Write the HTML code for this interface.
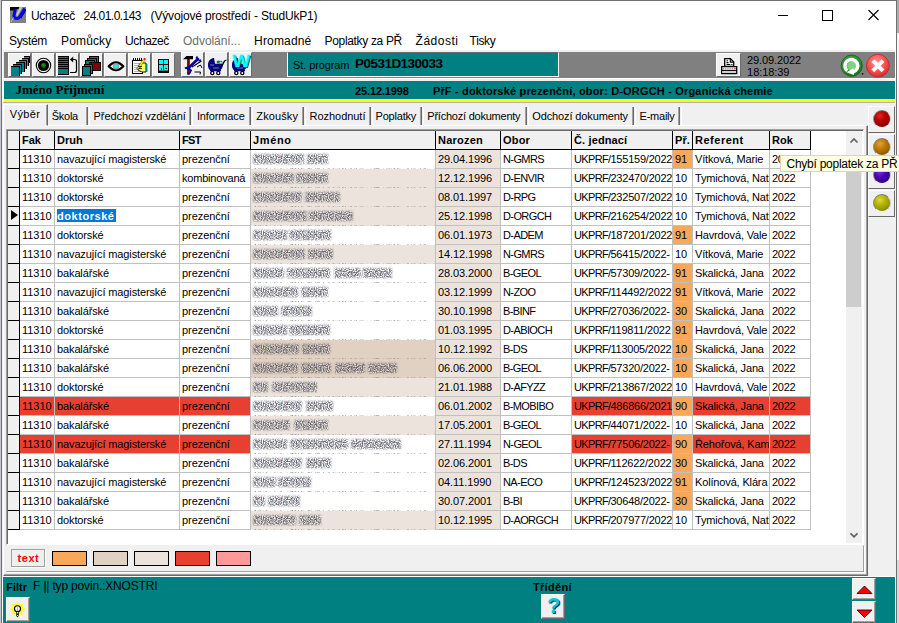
<!DOCTYPE html>
<html lang="cs"><head><meta charset="utf-8"><title>Uchazeč</title>
<style>
*{box-sizing:border-box;margin:0;padding:0}
html,body{width:899px;height:623px;overflow:hidden;background:#fff}
body{position:relative;font-family:"Liberation Sans",sans-serif;font-size:11px;color:#000}
.a{position:absolute}
.t{position:absolute;white-space:nowrap;line-height:1}
.tb{position:absolute;top:53px;width:23px;height:24px;background:#f0f0f0;border:1px solid;border-color:#fff #696969 #696969 #fff}
.tb svg{position:absolute;left:-1px;top:-1px}
.sep{position:absolute;top:107px;width:4px;height:18px;background:linear-gradient(90deg,#a0a0a0 0 1px,#696969 1px 2px,#f0f0f0 2px 3px,#fff 3px)}
.grid{position:absolute;left:0;top:0}
.hc{position:absolute;top:131px;height:19px;background:#f0f0f0;border-right:1px solid #000;border-bottom:1px solid #000;font-weight:bold}
.hc span{position:absolute;left:2px;top:4px;white-space:nowrap;line-height:1}
.ic{position:absolute;left:8px;width:12px;height:19px;background:#f0f0f0;border-right:1px solid #000;border-bottom:1px solid #000}
.ic i{position:absolute;left:3px;top:3px;border-left:7px solid #000;border-top:5.500px solid transparent;border-bottom:5.500px solid transparent}
.c{position:absolute;height:19px;border-right:1px solid #c0c0c0;border-bottom:1px solid #c0c0c0;overflow:hidden}
.c span{position:absolute;left:2px;top:4px;white-space:nowrap;line-height:1}
.c s{text-decoration:none;letter-spacing:-.65px}
.c em{font-style:normal;font-weight:bold;background:#0078d7;color:#fff;padding:1px 1px 0 0}
.c.j{border-bottom:0}
.c.j b{position:absolute;left:2px;top:4px;height:10px;filter:url(#nz);opacity:.88}
.c.j u{position:absolute;left:0;bottom:0;width:100%;height:1px;filter:url(#nl);background:#000}
.sw{position:absolute;top:551px;width:35px;height:15px;border:1px solid #000}
.btn{position:absolute;background:#f0f0f0;border:1px solid;border-color:#fff #696969 #696969 #fff;box-shadow:inset -1px -1px 0 #a0a0a0}
.sb{position:absolute;left:868px;width:27px;height:27px;background:#f0f0f0;border:1px solid;border-color:#fff #696969 #696969 #fff}
.ball{position:absolute;left:4px;top:2.500px;width:18px;height:18px;border-radius:50%;border:1px solid;border-color:#777 #ccc #eee #888}
</style></head><body>
<svg width="0" height="0" style="position:absolute"><defs><filter id="nz" x="-3%" y="-30%" width="106%" height="160%" color-interpolation-filters="sRGB"><feTurbulence type="fractalNoise" baseFrequency="0.85" numOctaves="1" seed="4" result="n"/><feColorMatrix in="n" type="matrix" values="0.5 0 0 0 0.12  0 0.5 0 0 0.12  0 0 0.5 0 0.16  0 0 0 3.4 -1.15" result="sp"/><feGaussianBlur in="SourceAlpha" stdDeviation="1.2" result="m"/><feComposite in="sp" in2="m" operator="in"/></filter><filter id="nl" x="0" y="-100%" width="100%" height="300%" color-interpolation-filters="sRGB"><feTurbulence type="fractalNoise" baseFrequency="0.7" numOctaves="1" seed="9" result="n"/><feColorMatrix in="n" type="matrix" values="0 0 0 0 0.6  0 0 0 0 0.6  0 0 0 0 0.6  0 0 0 3 -1.35" result="sp"/><feGaussianBlur in="SourceAlpha" stdDeviation="0.5" result="m"/><feComposite in="sp" in2="m" operator="in"/></filter></defs></svg>
<!-- window frame -->
<div class="a" style="left:0;top:0;width:1px;height:623px;background:#c4c8cc"></div>
<div class="a" style="left:1px;top:0;width:896px;height:623px;border:1px solid #707070;border-bottom:0;background:#fff"></div>
<div class="a" style="left:897px;top:0;width:2px;height:623px;background:linear-gradient(#ababab 0 33px,#f6f6f6 33px 560px,#d8d8d8 560px)"></div>
<!-- title bar -->
<svg class="a" style="left:10px;top:7px" width="16" height="16" viewBox="0 0 16 16"><rect width="16" height="16" fill="#808080"/><path d="M0 0h9v1.500l-5 2h-4z" fill="#000"/><path d="M9.500 .5l3 -.5l-5 9l-1.500 -1z" fill="#c8c8c8"/><path d="M10.500 11l5 -8" stroke="#000" stroke-width="1.600" fill="none"/><path d="M5.200 2.500l-1.200 6q0 3.200 3.500 3q1.300 -.2 2.300 -1.800l5 -8.200" stroke="#0000ff" stroke-width="3" fill="none" stroke-linejoin="round"/><path d="M1 15l2.500 -4.500" stroke="#c0c0c0" stroke-width="1"/></svg>
<svg class="a" style="left:770px;top:5px" width="120" height="22" viewBox="0 0 120 22"><path d="M8 10.5h10" stroke="#000" fill="none"/><rect x="52.500" y="5.500" width="10" height="10" stroke="#000" fill="none"/><path d="M98.500 5l10 10M108.500 5l-10 10" stroke="#000" stroke-width="1.100" fill="none"/></svg>
<div class="t" style="left:31.1px;top:10px;font-size:12px;letter-spacing:-0.413px;">Uchazeč</div>
<div class="t" style="left:83.6px;top:10px;font-size:12px;letter-spacing:-0.555px;">24.01.0.143</div>
<div class="t" style="left:150.6px;top:10px;font-size:12px;letter-spacing:-0.17px;">(Vývojové prostředí - StudUkP1)</div>
<div class="t" style="left:9.1px;top:35px;font-size:12px;letter-spacing:-0.369px;">Systém</div>
<div class="t" style="left:61.1px;top:35px;font-size:12px;letter-spacing:0.134px;">Pomůcky</div>
<div class="t" style="left:125.1px;top:35px;font-size:12px;letter-spacing:-0.413px;">Uchazeč</div>
<div class="t" style="left:183.1px;top:35px;font-size:12px;letter-spacing:-0.066px;color:#6d6d6d;">Odvolání...</div>
<div class="t" style="left:254.1px;top:35px;font-size:12px;letter-spacing:0.159px;">Hromadné</div>
<div class="t" style="left:324.6px;top:35px;font-size:12px;letter-spacing:-0.339px;">Poplatky za PŘ</div>
<div class="t" style="left:415.6px;top:35px;font-size:12px;letter-spacing:0.492px;">Žádosti</div>
<div class="t" style="left:469.6px;top:35px;font-size:12px;letter-spacing:-0.352px;">Tisky</div>
<!-- toolbar -->
<div class="a" style="left:3px;top:50px;width:892px;height:31px;background:#f0f0f0"></div>
<div class="a" style="left:4px;top:52px;width:891px;height:26px;background:#808080"></div>
<div class="a" style="left:3px;top:78px;width:892px;height:1px;background:#fff"></div>
<div class="tb" style="left:8px"><svg width="23" height="24" shape-rendering="crispEdges"><rect x="16" y="3" width="6" height="7" fill="#000"/><rect x="16" y="4" width="5" height="6" fill="#808000"/><rect x="14" y="5" width="7" height="8" fill="#000"/><rect x="14" y="6" width="6" height="7" fill="#808000"/><rect x="11" y="7" width="8" height="9" fill="#000"/><rect x="11" y="8" width="7" height="8" fill="#808000"/><rect x="8" y="9" width="9" height="10" fill="#000"/><rect x="8" y="10" width="8" height="9" fill="#008080"/><rect x="5" y="11" width="9" height="10" fill="#000"/><rect x="5" y="12" width="8" height="9" fill="#008080"/><rect x="3" y="13" width="9" height="10" fill="#000"/><rect x="3" y="14" width="8" height="9" fill="#008080"/></svg></div>
<div class="tb" style="left:32px"><svg width="23" height="24"><circle cx="11.500" cy="12.500" r="7.200" fill="#f8f8f8" stroke="#000" stroke-width="1.100"/><circle cx="11.500" cy="12.500" r="5.600" fill="#000"/><circle cx="11.500" cy="12.500" r="2.400" fill="#008000"/><circle cx="11.200" cy="11.800" r=".8" fill="#30a030"/></svg></div>
<div class="tb" style="left:56px"><svg width="23" height="24"><g shape-rendering="crispEdges"><rect x="2" y="3" width="11" height="19" fill="#000"/><rect x="2" y="16" width="10" height="5" fill="#008080"/><path d="M2 4.500h10M2 6.500h10M2 8.500h10M2 10.500h10M2 12.500h10M2 14.500h10" stroke="#008080" fill="none"/></g><path d="M14 19.500h4.500q2 0 2 -2v-9q0 -2 -2 -2h-4" stroke="#000" stroke-width="1.200" fill="none"/><path d="M14 6.500l3.200 -3v6z" fill="#000"/></svg></div>
<div class="tb" style="left:80px"><svg width="23" height="24" shape-rendering="crispEdges"><g stroke="#000"><rect x="9.500" y="3.500" width="9" height="9" fill="#008080"/><rect x="7.500" y="5.500" width="9" height="9" fill="#008080"/><rect x="5.500" y="7.500" width="9" height="9" fill="#008080"/><rect x="9.500" y="9.500" width="11" height="8" fill="#800000"/><rect x="4.500" y="11.500" width="8" height="9" fill="#008080"/><rect x="2.500" y="13.500" width="8" height="9" fill="#008080"/></g></svg></div>
<div class="tb" style="left:104px"><svg width="23" height="24"><path d="M4.600 13.300q7.400 -7.800 14.800 0q-7.400 7.800 -14.800 0z" fill="#fff" stroke="#000" stroke-width="2.100" stroke-linejoin="round"/><ellipse cx="12" cy="13.300" rx="3.300" ry="3.200" fill="#9c9c9c"/><circle cx="12" cy="13.300" r="1.800" fill="#00ffff"/></svg></div>
<div class="tb" style="left:128px"><svg width="23" height="24"><g shape-rendering="crispEdges"><rect x="4.500" y="7.500" width="10" height="13" fill="#fff" stroke="#000"/><path d="M5 5v3M7 5v3M9 5v3M11 5v3M13 5v3" stroke="#000"/><path d="M6 10.500h8M6 12.500h6M6 14.500h5M6 16.500h6M6 18.500h7" stroke="#00ffff"/><rect x="18" y="11" width="2" height="8" fill="#00ffff"/></g><path d="M11 11.500l3 -1.500h4v9h-4l-4 -2v-2l2 0z" fill="#ffff60" stroke="#000" stroke-width=".9"/><path d="M8.500 15.500l7 -9.500l1.500 1.200l-6.500 9z" fill="#ffff00" stroke="#404000" stroke-width=".5"/><path d="M15.500 6l1 -1.300l1.500 1.200l-1 1.300z" fill="#ff0000"/><path d="M10 13.500h4M10.500 15.500h3.500" stroke="#000" stroke-width=".8"/></svg></div>
<div class="tb" style="left:152px"><svg width="23" height="24" shape-rendering="crispEdges"><rect x="6" y="6" width="11" height="14" fill="#000"/><rect x="7" y="7" width="9" height="11" fill="#800000"/><rect x="7" y="7" width="4" height="4" fill="#00ffff"/><rect x="12" y="7" width="4" height="4" fill="#00ffff"/><rect x="7" y="12" width="4" height="6" fill="#00ffff"/><rect x="12" y="12" width="4" height="6" fill="#00ffff"/><rect x="9" y="15" width="1" height="2" fill="#a00000"/><rect x="13" y="15" width="2" height="1" fill="#a00000"/><rect x="7" y="17" width="9" height="1" fill="#408080"/></svg></div>
<div class="tb" style="left:181px;top:52px;height:25px"><svg width="23" height="25"><path d="M2 7.200l3.500 -3.200h6.500v3.200z" fill="#000"/><rect x="6.100" y="7" width="2.700" height="15.700" fill="#800000"/><path d="M17.800 6.200l-11.800 11" stroke="#0000a0" stroke-width="2.600"/><path d="M4 16.500q2 -1.500 4 0l2 2q-1 3 -3 3.500" fill="none" stroke="#0000a0" stroke-width="1.800"/><path d="M15 6.500l1.500 -2M17.500 9l2.500 -1" stroke="#0000a0" stroke-width="1.600"/><path d="M11 15l9.500 -6" stroke="#000" stroke-width="1.100"/><path d="M16 15l3.500 -2l1.500 3M13.500 20h6l-.5 2.500" stroke="#000" fill="none" stroke-width="1"/></svg></div>
<div class="tb" style="left:205px;top:52px;height:25px"><svg width="23" height="25"><path d="M3 13c0 -4 2 -6.500 6 -7l1 5.500l8 .5c0 4 -2 7 -6 7h-4c-3 0 -5 -2 -5 -6z" fill="#000080"/><path d="M17 14l2.500 -5l2 -1" stroke="#000" stroke-width="1.300" fill="none"/><path d="M11 10l2 -1.500l4 .5l1 2.500h-6z" fill="#008080"/><path d="M14 10.500l2 -1l1 1.500z" fill="#fff"/><path d="M10 8.500l2.500 3h-2.500z" fill="#ffff00"/><path d="M5 13h4M8 16h6" stroke="#808080" stroke-width="1"/><circle cx="7.300" cy="21" r="1.600" fill="#fff" stroke="#000" stroke-width="1.300"/><circle cx="13.300" cy="21" r="1.600" fill="#fff" stroke="#000" stroke-width="1.300"/><path d="M5 18.500h11" stroke="#000080" stroke-width="1.500"/></svg></div>
<div class="tb" style="left:229px;top:52px;height:25px"><svg width="23" height="25"><path d="M3 13c0 -4 2 -6.500 6 -7l1 5.500l8 .5c0 4 -2 7 -6 7h-4c-3 0 -5 -2 -5 -6z" fill="#000080"/><path d="M8 16h6" stroke="#808080" stroke-width="1"/><circle cx="7.300" cy="21" r="1.600" fill="#fff" stroke="#000" stroke-width="1.300"/><circle cx="13.300" cy="21" r="1.600" fill="#fff" stroke="#000" stroke-width="1.300"/><path d="M5 18.500h11" stroke="#000080" stroke-width="1.500"/><text x="3.600" y="15" font-family="Liberation Sans,sans-serif" font-weight="bold" font-size="16.500" textLength="17.800" lengthAdjust="spacingAndGlyphs" fill="#000" transform="translate(.7,.6)">W</text><text x="3.600" y="15" font-family="Liberation Sans,sans-serif" font-weight="bold" font-size="16.500" textLength="17.800" lengthAdjust="spacingAndGlyphs" fill="#00ffff" stroke="#00ffff" stroke-width=".4">W</text></svg></div>
<div class="tb" style="left:716px;width:25px"><svg width="25" height="24"><path d="M8.700 13.500v-7.800h5.800l3.200 3.200v4.600z" fill="#fff" stroke="#000" stroke-width="1.300"/><path d="M14.300 5.700v3.400h3.400" fill="none" stroke="#000" stroke-width="1.100"/><path d="M10.500 7.700h1.500M10.500 9.600h2M10.500 11.500h3.800M15.300 11.500h1.200" stroke="#000" stroke-width="1.100"/><rect x="5.700" y="13.600" width="15" height="7" fill="#fff" stroke="#000" stroke-width="1.300"/><path d="M7 15.500h11" stroke="#999" stroke-width="1.400" stroke-dasharray="1 .8"/><rect x="18.300" y="14.800" width="1.300" height="1.300" fill="#ff0000"/><path d="M5.700 17.400h15" stroke="#000" stroke-width="1.100"/><rect x="6.500" y="18" width="13.500" height="2" fill="#d0d0d0"/></svg></div>
<svg class="a" style="left:838px;top:52px" width="57" height="28" viewBox="0 0 57 28"><defs><radialGradient id="gg" cx=".45" cy=".4" r=".65"><stop offset="0" stop-color="#58b858"/><stop offset=".7" stop-color="#2c8c2c"/><stop offset="1" stop-color="#145c14"/></radialGradient><radialGradient id="rg" cx=".45" cy=".35" r=".7"><stop offset="0" stop-color="#ff9898"/><stop offset=".55" stop-color="#f85050"/><stop offset="1" stop-color="#d42424"/></radialGradient></defs><circle cx="13.700" cy="13.700" r="10.600" fill="url(#gg)" stroke="#1c641c" stroke-width=".9"/><circle cx="13.700" cy="13.700" r="4.600" fill="#84d084"/><path d="M9.300 18.700a6.400 6.400 0 1 1 5.500 1.300" fill="none" stroke="#fff" stroke-width="3.400"/><path d="M8.700 20.300l6.800 -4.300l.5 7z" fill="#fff"/><circle cx="24.600" cy="21.800" r=".9" fill="#111"/><circle cx="39.900" cy="13.700" r="11.400" fill="url(#rg)" stroke="#c82828" stroke-width=".9"/><path d="M34.800 8.600l10.200 10.200M45 8.600l-10.200 10.200" stroke="#fff" stroke-width="4"/></svg>

<!-- st program field -->
<div class="a" style="left:287px;top:52px;width:272px;height:25px;background:#008080;border:1px solid;border-color:#696969 #fff #fff #fff"></div>
<!-- teal name bar -->
<div class="a" style="left:4px;top:81px;width:891px;height:18px;background:#008080"></div>
<div class="a" style="left:4px;top:99px;width:891px;height:3px;background:#ffff00"></div>
<div class="a" style="left:2px;top:102px;width:894px;height:474px;background:#f0f0f0"></div>
<div class="a" style="left:3px;top:102px;width:892px;height:1px;background:#b0b0b0"></div>
<!-- tab page frame -->
<div class="a" style="left:3px;top:125px;width:865px;height:451px;border:1px solid;border-color:#fff #696969 #696969 #fff;box-shadow:inset -1px -1px 0 #a0a0a0"></div>
<!-- selected tab -->
<div class="a" style="left:3px;top:104px;width:45px;height:22px;background:#f0f0f0;border:1px solid;border-color:#fff #696969 #f0f0f0 #fff;box-shadow:inset -1px 0 0 #a0a0a0"></div>
<div class="t" style="left:9.7px;top:109px;font-size:11px;letter-spacing:0.37px;">Výběr</div>
<div class="t" style="left:51.8px;top:111px;font-size:11px;letter-spacing:-0.286px;">Škola</div>
<div class="t" style="left:93.6px;top:111px;font-size:11px;letter-spacing:-0.081px;">Předchozí vzdělání</div>
<div class="t" style="left:196.9px;top:111px;font-size:11px;letter-spacing:-0.125px;">Informace</div>
<div class="t" style="left:256.3px;top:111px;font-size:11px;letter-spacing:0.119px;">Zkoušky</div>
<div class="t" style="left:309.6px;top:111px;font-size:11px;letter-spacing:-0.047px;">Rozhodnutí</div>
<div class="t" style="left:375.6px;top:111px;font-size:11px;letter-spacing:-0.213px;">Poplatky</div>
<div class="t" style="left:427.3px;top:111px;font-size:11px;letter-spacing:-0.229px;">Příchozí dokumenty</div>
<div class="t" style="left:532.3px;top:111px;font-size:11px;letter-spacing:-0.126px;">Odchozí dokumenty</div>
<div class="t" style="left:639.6px;top:111px;font-size:11px;letter-spacing:-0.239px;">E-maily</div>
<div class="sep" style="left:86px"></div>
<div class="sep" style="left:189px"></div>
<div class="sep" style="left:249px"></div>
<div class="sep" style="left:302px"></div>
<div class="sep" style="left:369px"></div>
<div class="sep" style="left:420px"></div>
<div class="sep" style="left:525px"></div>
<div class="sep" style="left:632px"></div>
<div class="sep" style="left:678px"></div>
<!-- grid panel -->
<div class="a" style="left:6px;top:129px;width:858px;height:416px;background:#fff;border:1px solid;border-color:#a0a0a0 #fff #fff #a0a0a0;box-shadow:inset 1px 1px 0 #696969"></div>
<div class="grid">
<div class="hc" style="left:8px;width:12px"></div>
<div class="hc" style="left:20px;width:35px"><span style="letter-spacing:-0.056px">Fak</span></div>
<div class="hc" style="left:55px;width:125px"><span style="letter-spacing:0.032px">Druh</span></div>
<div class="hc" style="left:180px;width:71px"><span style="letter-spacing:-0.66px">FST</span></div>
<div class="hc" style="left:251px;width:185px"><span style="letter-spacing:0.626px">Jméno</span></div>
<div class="hc" style="left:436px;width:65px"><span style="letter-spacing:0.228px">Narozen</span></div>
<div class="hc" style="left:501px;width:71px"><span style="letter-spacing:0.18px">Obor</span></div>
<div class="hc" style="left:572px;width:101px"><span style="letter-spacing:0.133px">Č. jednací</span></div>
<div class="hc" style="left:673px;width:20px"><span style="letter-spacing:0.104px">Př.</span></div>
<div class="hc" style="left:693px;width:77px"><span style="letter-spacing:0.522px">Referent</span></div>
<div class="hc" style="left:770px;width:41px"><span style="letter-spacing:0.006px">Rok</span></div>
<div class="ic" style="top:150px"></div>
<div class="c" style="left:20px;top:150px;width:35px;background:#fff"><span style="letter-spacing:-0.05px">11310</span></div>
<div class="c" style="left:55px;top:150px;width:125px;background:#fff"><span style="letter-spacing:-0.12px">navazující magisterské</span></div>
<div class="c" style="left:180px;top:150px;width:71px;background:#fff"><span style="letter-spacing:-0.05px">prezenční</span></div>
<div class="c j" style="left:251px;top:150px;width:185px;background:#fff"><u></u><b style="width:75px;background:linear-gradient(90deg,transparent 0px 0.3px,#000 0.3px 51px,transparent 51px 53.8px,#000 53.8px 74.8px)"></b></div>
<div class="c" style="left:436px;top:150px;width:65px;background:#ece4dc"><span style="letter-spacing:-0.1px">29.04.1996</span></div>
<div class="c" style="left:501px;top:150px;width:71px;background:#fff"><span style="letter-spacing:-0.6px">N-GMRS</span></div>
<div class="c" style="left:572px;top:150px;width:101px;background:#fff"><span style="letter-spacing:-0.22px"><s>UKPRF/</s>155159/2022</span></div>
<div class="c" style="left:673px;top:150px;width:20px;background:#f8a858"><span style="letter-spacing:-0.2px">91</span></div>
<div class="c" style="left:693px;top:150px;width:77px;background:#fff"><span style="letter-spacing:-0.15px">Vítková, Marie</span></div>
<div class="c" style="left:770px;top:150px;width:41px;background:#fff"><span style="letter-spacing:-0.3px">2022</span></div>
<div class="ic" style="top:169px"></div>
<div class="c" style="left:20px;top:169px;width:35px;background:#fff"><span style="letter-spacing:-0.05px">11310</span></div>
<div class="c" style="left:55px;top:169px;width:125px;background:#fff"><span style="letter-spacing:-0.12px">doktorské</span></div>
<div class="c" style="left:180px;top:169px;width:71px;background:#fff"><span style="letter-spacing:-0.2px">kombinovaná</span></div>
<div class="c j" style="left:251px;top:169px;width:185px;background:#ece4dc"><u></u><b style="width:75px;background:linear-gradient(90deg,transparent 0px 0.3px,#000 0.3px 41px,transparent 41px 43px,#000 43px 74.8px)"></b></div>
<div class="c" style="left:436px;top:169px;width:65px;background:#ece4dc"><span style="letter-spacing:-0.1px">12.12.1996</span></div>
<div class="c" style="left:501px;top:169px;width:71px;background:#fff"><span style="letter-spacing:-0.6px">D-ENVIR</span></div>
<div class="c" style="left:572px;top:169px;width:101px;background:#fff"><span style="letter-spacing:-0.22px"><s>UKPRF/</s>232470/2022</span></div>
<div class="c" style="left:673px;top:169px;width:20px;background:#fff"><span style="letter-spacing:-0.2px">10</span></div>
<div class="c" style="left:693px;top:169px;width:77px;background:#fff"><span style="letter-spacing:-0.15px">Tymichová, Nat</span></div>
<div class="c" style="left:770px;top:169px;width:41px;background:#fff"><span style="letter-spacing:-0.3px">2022</span></div>
<div class="ic" style="top:188px"></div>
<div class="c" style="left:20px;top:188px;width:35px;background:#fff"><span style="letter-spacing:-0.05px">11310</span></div>
<div class="c" style="left:55px;top:188px;width:125px;background:#fff"><span style="letter-spacing:-0.12px">doktorské</span></div>
<div class="c" style="left:180px;top:188px;width:71px;background:#fff"><span style="letter-spacing:-0.05px">prezenční</span></div>
<div class="c j" style="left:251px;top:188px;width:185px;background:#ece4dc"><u></u><b style="width:87px;background:linear-gradient(90deg,transparent 0px 0.3px,#000 0.3px 49px,transparent 49px 52px,#000 52px 86.7px)"></b></div>
<div class="c" style="left:436px;top:188px;width:65px;background:#ece4dc"><span style="letter-spacing:-0.1px">08.01.1997</span></div>
<div class="c" style="left:501px;top:188px;width:71px;background:#fff"><span style="letter-spacing:-0.6px">D-RPG</span></div>
<div class="c" style="left:572px;top:188px;width:101px;background:#fff"><span style="letter-spacing:-0.22px"><s>UKPRF/</s>232507/2022</span></div>
<div class="c" style="left:673px;top:188px;width:20px;background:#fff"><span style="letter-spacing:-0.2px">10</span></div>
<div class="c" style="left:693px;top:188px;width:77px;background:#fff"><span style="letter-spacing:-0.15px">Tymichová, Nat</span></div>
<div class="c" style="left:770px;top:188px;width:41px;background:#fff"><span style="letter-spacing:-0.3px">2022</span></div>
<div class="ic" style="top:207px"><i></i></div>
<div class="c" style="left:20px;top:207px;width:35px;background:#fff"><span style="letter-spacing:-0.05px">11310</span></div>
<div class="c" style="left:55px;top:207px;width:125px;background:#fff"><span style="letter-spacing:0.55px"><em>doktorské</em></span></div>
<div class="c" style="left:180px;top:207px;width:71px;background:#fff"><span style="letter-spacing:-0.05px">prezenční</span></div>
<div class="c j" style="left:251px;top:207px;width:185px;background:#ece4dc"><u></u><b style="width:100px;background:linear-gradient(90deg,transparent 0px 0.3px,#000 0.3px 53.8px,transparent 53.8px 56.5px,#000 56.5px 99.5px)"></b></div>
<div class="c" style="left:436px;top:207px;width:65px;background:#ece4dc"><span style="letter-spacing:-0.1px">25.12.1998</span></div>
<div class="c" style="left:501px;top:207px;width:71px;background:#fff"><span style="letter-spacing:-0.6px">D-ORGCH</span></div>
<div class="c" style="left:572px;top:207px;width:101px;background:#fff"><span style="letter-spacing:-0.22px"><s>UKPRF/</s>216254/2022</span></div>
<div class="c" style="left:673px;top:207px;width:20px;background:#fff"><span style="letter-spacing:-0.2px">10</span></div>
<div class="c" style="left:693px;top:207px;width:77px;background:#fff"><span style="letter-spacing:-0.15px">Tymichová, Nat</span></div>
<div class="c" style="left:770px;top:207px;width:41px;background:#fff"><span style="letter-spacing:-0.3px">2022</span></div>
<div class="ic" style="top:226px"></div>
<div class="c" style="left:20px;top:226px;width:35px;background:#fff"><span style="letter-spacing:-0.05px">11310</span></div>
<div class="c" style="left:55px;top:226px;width:125px;background:#fff"><span style="letter-spacing:-0.12px">doktorské</span></div>
<div class="c" style="left:180px;top:226px;width:71px;background:#fff"><span style="letter-spacing:-0.05px">prezenční</span></div>
<div class="c j" style="left:251px;top:226px;width:185px;background:#fff"><u></u><b style="width:78px;background:linear-gradient(90deg,transparent 0px 0.3px,#000 0.3px 33.6px,transparent 33.6px 36.4px,#000 36.4px 78.5px)"></b></div>
<div class="c" style="left:436px;top:226px;width:65px;background:#ece4dc"><span style="letter-spacing:-0.1px">06.01.1973</span></div>
<div class="c" style="left:501px;top:226px;width:71px;background:#fff"><span style="letter-spacing:-0.6px">D-ADEM</span></div>
<div class="c" style="left:572px;top:226px;width:101px;background:#fff"><span style="letter-spacing:-0.22px"><s>UKPRF/</s>187201/2022</span></div>
<div class="c" style="left:673px;top:226px;width:20px;background:#f8a858"><span style="letter-spacing:-0.2px">91</span></div>
<div class="c" style="left:693px;top:226px;width:77px;background:#fff"><span style="letter-spacing:-0.15px">Havrdová, Vale</span></div>
<div class="c" style="left:770px;top:226px;width:41px;background:#fff"><span style="letter-spacing:-0.3px">2022</span></div>
<div class="ic" style="top:245px"></div>
<div class="c" style="left:20px;top:245px;width:35px;background:#fff"><span style="letter-spacing:-0.05px">11310</span></div>
<div class="c" style="left:55px;top:245px;width:125px;background:#fff"><span style="letter-spacing:-0.12px">navazující magisterské</span></div>
<div class="c" style="left:180px;top:245px;width:71px;background:#fff"><span style="letter-spacing:-0.05px">prezenční</span></div>
<div class="c j" style="left:251px;top:245px;width:185px;background:#ece4dc"><u></u><b style="width:80px;background:linear-gradient(90deg,transparent 0px 0.3px,#000 0.3px 52px,transparent 52px 54.7px,#000 54.7px 80.3px)"></b></div>
<div class="c" style="left:436px;top:245px;width:65px;background:#ece4dc"><span style="letter-spacing:-0.1px">14.12.1998</span></div>
<div class="c" style="left:501px;top:245px;width:71px;background:#fff"><span style="letter-spacing:-0.6px">N-GMRS</span></div>
<div class="c" style="left:572px;top:245px;width:101px;background:#fff"><span style="letter-spacing:-0.22px"><s>UKPRF/</s>56415/2022-</span></div>
<div class="c" style="left:673px;top:245px;width:20px;background:#fff"><span style="letter-spacing:-0.2px">10</span></div>
<div class="c" style="left:693px;top:245px;width:77px;background:#fff"><span style="letter-spacing:-0.15px">Vítková, Marie</span></div>
<div class="c" style="left:770px;top:245px;width:41px;background:#fff"><span style="letter-spacing:-0.3px">2022</span></div>
<div class="ic" style="top:264px"></div>
<div class="c" style="left:20px;top:264px;width:35px;background:#fff"><span style="letter-spacing:-0.05px">11310</span></div>
<div class="c" style="left:55px;top:264px;width:125px;background:#fff"><span style="letter-spacing:-0.12px">bakalářské</span></div>
<div class="c" style="left:180px;top:264px;width:71px;background:#fff"><span style="letter-spacing:-0.05px">prezenční</span></div>
<div class="c j" style="left:251px;top:264px;width:185px;background:#fff"><u></u><b style="width:139px;background:linear-gradient(90deg,transparent 0px 0.3px,#000 0.3px 30.9px,transparent 30.9px 33.6px,#000 33.6px 77.5px,transparent 77.5px 81.2px,#000 81.2px 107.8px,transparent 107.8px 110.5px,#000 110.5px 138.9px)"></b></div>
<div class="c" style="left:436px;top:264px;width:65px;background:#ece4dc"><span style="letter-spacing:-0.1px">28.03.2000</span></div>
<div class="c" style="left:501px;top:264px;width:71px;background:#fff"><span style="letter-spacing:-0.6px">B-GEOL</span></div>
<div class="c" style="left:572px;top:264px;width:101px;background:#fff"><span style="letter-spacing:-0.22px"><s>UKPRF/</s>57309/2022-</span></div>
<div class="c" style="left:673px;top:264px;width:20px;background:#f8a858"><span style="letter-spacing:-0.2px">91</span></div>
<div class="c" style="left:693px;top:264px;width:77px;background:#fff"><span style="letter-spacing:-0.15px">Skalická, Jana</span></div>
<div class="c" style="left:770px;top:264px;width:41px;background:#fff"><span style="letter-spacing:-0.3px">2022</span></div>
<div class="ic" style="top:283px"></div>
<div class="c" style="left:20px;top:283px;width:35px;background:#fff"><span style="letter-spacing:-0.05px">11310</span></div>
<div class="c" style="left:55px;top:283px;width:125px;background:#fff"><span style="letter-spacing:-0.12px">navazující magisterské</span></div>
<div class="c" style="left:180px;top:283px;width:71px;background:#fff"><span style="letter-spacing:-0.05px">prezenční</span></div>
<div class="c j" style="left:251px;top:283px;width:185px;background:#fff"><u></u><b style="width:75px;background:linear-gradient(90deg,transparent 0px 0.3px,#000 0.3px 45.5px,transparent 45.5px 48.3px,#000 48.3px 74.8px)"></b></div>
<div class="c" style="left:436px;top:283px;width:65px;background:#ece4dc"><span style="letter-spacing:-0.1px">03.12.1999</span></div>
<div class="c" style="left:501px;top:283px;width:71px;background:#fff"><span style="letter-spacing:-0.6px">N-ZOO</span></div>
<div class="c" style="left:572px;top:283px;width:101px;background:#fff"><span style="letter-spacing:-0.22px"><s>UKPRF/</s>114492/2022</span></div>
<div class="c" style="left:673px;top:283px;width:20px;background:#f8a858"><span style="letter-spacing:-0.2px">91</span></div>
<div class="c" style="left:693px;top:283px;width:77px;background:#fff"><span style="letter-spacing:-0.15px">Vítková, Marie</span></div>
<div class="c" style="left:770px;top:283px;width:41px;background:#fff"><span style="letter-spacing:-0.3px">2022</span></div>
<div class="ic" style="top:302px"></div>
<div class="c" style="left:20px;top:302px;width:35px;background:#fff"><span style="letter-spacing:-0.05px">11310</span></div>
<div class="c" style="left:55px;top:302px;width:125px;background:#fff"><span style="letter-spacing:-0.12px">bakalářské</span></div>
<div class="c" style="left:180px;top:302px;width:71px;background:#fff"><span style="letter-spacing:-0.05px">prezenční</span></div>
<div class="c j" style="left:251px;top:302px;width:185px;background:#fff"><u></u><b style="width:59px;background:linear-gradient(90deg,transparent 0px 0.3px,#000 0.3px 25.4px,transparent 25.4px 28.1px,#000 28.1px 59.2px)"></b></div>
<div class="c" style="left:436px;top:302px;width:65px;background:#ece4dc"><span style="letter-spacing:-0.1px">30.10.1998</span></div>
<div class="c" style="left:501px;top:302px;width:71px;background:#fff"><span style="letter-spacing:-0.6px">B-BINF</span></div>
<div class="c" style="left:572px;top:302px;width:101px;background:#fff"><span style="letter-spacing:-0.22px"><s>UKPRF/</s>27036/2022-</span></div>
<div class="c" style="left:673px;top:302px;width:20px;background:#f8a858"><span style="letter-spacing:-0.2px">30</span></div>
<div class="c" style="left:693px;top:302px;width:77px;background:#fff"><span style="letter-spacing:-0.15px">Skalická, Jana</span></div>
<div class="c" style="left:770px;top:302px;width:41px;background:#fff"><span style="letter-spacing:-0.3px">2022</span></div>
<div class="ic" style="top:321px"></div>
<div class="c" style="left:20px;top:321px;width:35px;background:#fff"><span style="letter-spacing:-0.05px">11310</span></div>
<div class="c" style="left:55px;top:321px;width:125px;background:#fff"><span style="letter-spacing:-0.12px">doktorské</span></div>
<div class="c" style="left:180px;top:321px;width:71px;background:#fff"><span style="letter-spacing:-0.05px">prezenční</span></div>
<div class="c j" style="left:251px;top:321px;width:185px;background:#fff"><u></u><b style="width:77px;background:linear-gradient(90deg,transparent 0px 0.3px,#000 0.3px 33.6px,transparent 33.6px 35.8px,#000 35.8px 76.6px)"></b></div>
<div class="c" style="left:436px;top:321px;width:65px;background:#ece4dc"><span style="letter-spacing:-0.1px">01.03.1995</span></div>
<div class="c" style="left:501px;top:321px;width:71px;background:#fff"><span style="letter-spacing:-0.6px">D-ABIOCH</span></div>
<div class="c" style="left:572px;top:321px;width:101px;background:#fff"><span style="letter-spacing:-0.22px"><s>UKPRF/</s>119811/2022</span></div>
<div class="c" style="left:673px;top:321px;width:20px;background:#f8a858"><span style="letter-spacing:-0.2px">91</span></div>
<div class="c" style="left:693px;top:321px;width:77px;background:#fff"><span style="letter-spacing:-0.15px">Havrdová, Vale</span></div>
<div class="c" style="left:770px;top:321px;width:41px;background:#fff"><span style="letter-spacing:-0.3px">2022</span></div>
<div class="ic" style="top:340px"></div>
<div class="c" style="left:20px;top:340px;width:35px;background:#fff"><span style="letter-spacing:-0.05px">11310</span></div>
<div class="c" style="left:55px;top:340px;width:125px;background:#fff"><span style="letter-spacing:-0.12px">bakalářské</span></div>
<div class="c" style="left:180px;top:340px;width:71px;background:#fff"><span style="letter-spacing:-0.05px">prezenční</span></div>
<div class="c j" style="left:251px;top:340px;width:185px;background:#e0d1c2"><u></u><b style="width:77px;background:linear-gradient(90deg,transparent 0px 0.3px,#000 0.3px 46.4px,transparent 46.4px 49.2px,#000 49.2px 76.6px)"></b></div>
<div class="c" style="left:436px;top:340px;width:65px;background:#ece4dc"><span style="letter-spacing:-0.1px">10.12.1992</span></div>
<div class="c" style="left:501px;top:340px;width:71px;background:#fff"><span style="letter-spacing:-0.6px">B-DS</span></div>
<div class="c" style="left:572px;top:340px;width:101px;background:#fff"><span style="letter-spacing:-0.22px"><s>UKPRF/</s>113005/2022</span></div>
<div class="c" style="left:673px;top:340px;width:20px;background:#f8a858"><span style="letter-spacing:-0.2px">10</span></div>
<div class="c" style="left:693px;top:340px;width:77px;background:#fff"><span style="letter-spacing:-0.15px">Skalická, Jana</span></div>
<div class="c" style="left:770px;top:340px;width:41px;background:#fff"><span style="letter-spacing:-0.3px">2022</span></div>
<div class="ic" style="top:359px"></div>
<div class="c" style="left:20px;top:359px;width:35px;background:#fff"><span style="letter-spacing:-0.05px">11310</span></div>
<div class="c" style="left:55px;top:359px;width:125px;background:#fff"><span style="letter-spacing:-0.12px">bakalářské</span></div>
<div class="c" style="left:180px;top:359px;width:71px;background:#fff"><span style="letter-spacing:-0.05px">prezenční</span></div>
<div class="c j" style="left:251px;top:359px;width:185px;background:#e0d1c2"><u></u><b style="width:144px;background:linear-gradient(90deg,transparent 0px 0.3px,#000 0.3px 45.5px,transparent 45.5px 48.3px,#000 48.3px 78.5px,transparent 78.5px 82px,#000 82px 112.3px,transparent 112.3px 115px,#000 115px 143.5px)"></b></div>
<div class="c" style="left:436px;top:359px;width:65px;background:#ece4dc"><span style="letter-spacing:-0.1px">06.06.2000</span></div>
<div class="c" style="left:501px;top:359px;width:71px;background:#fff"><span style="letter-spacing:-0.6px">B-GEOL</span></div>
<div class="c" style="left:572px;top:359px;width:101px;background:#fff"><span style="letter-spacing:-0.22px"><s>UKPRF/</s>57320/2022-</span></div>
<div class="c" style="left:673px;top:359px;width:20px;background:#f8a858"><span style="letter-spacing:-0.2px">10</span></div>
<div class="c" style="left:693px;top:359px;width:77px;background:#fff"><span style="letter-spacing:-0.15px">Skalická, Jana</span></div>
<div class="c" style="left:770px;top:359px;width:41px;background:#fff"><span style="letter-spacing:-0.3px">2022</span></div>
<div class="ic" style="top:378px"></div>
<div class="c" style="left:20px;top:378px;width:35px;background:#fff"><span style="letter-spacing:-0.05px">11310</span></div>
<div class="c" style="left:55px;top:378px;width:125px;background:#fff"><span style="letter-spacing:-0.12px">doktorské</span></div>
<div class="c" style="left:180px;top:378px;width:71px;background:#fff"><span style="letter-spacing:-0.05px">prezenční</span></div>
<div class="c j" style="left:251px;top:378px;width:185px;background:#ece4dc"><u></u><b style="width:64px;background:linear-gradient(90deg,#000 -0.1px 15.3px,transparent 15.3px 19px,#000 19px 64px)"></b></div>
<div class="c" style="left:436px;top:378px;width:65px;background:#ece4dc"><span style="letter-spacing:-0.1px">21.01.1988</span></div>
<div class="c" style="left:501px;top:378px;width:71px;background:#fff"><span style="letter-spacing:-0.6px">D-AFYZZ</span></div>
<div class="c" style="left:572px;top:378px;width:101px;background:#fff"><span style="letter-spacing:-0.22px"><s>UKPRF/</s>213867/2022</span></div>
<div class="c" style="left:673px;top:378px;width:20px;background:#fff"><span style="letter-spacing:-0.2px">10</span></div>
<div class="c" style="left:693px;top:378px;width:77px;background:#fff"><span style="letter-spacing:-0.15px">Havrdová, Vale</span></div>
<div class="c" style="left:770px;top:378px;width:41px;background:#fff"><span style="letter-spacing:-0.3px">2022</span></div>
<div class="ic" style="top:397px"></div>
<div class="c" style="left:20px;top:397px;width:35px;background:#e84030"><span style="letter-spacing:-0.05px">11310</span></div>
<div class="c" style="left:55px;top:397px;width:125px;background:#e84030"><span style="letter-spacing:-0.12px">bakalářské</span></div>
<div class="c" style="left:180px;top:397px;width:71px;background:#e84030"><span style="letter-spacing:-0.05px">prezenční</span></div>
<div class="c j" style="left:251px;top:397px;width:185px;background:#fff"><u></u><b style="width:80px;background:linear-gradient(90deg,#000 0px 49.4px,transparent 49.4px 52.6px,#000 52.6px 80px)"></b></div>
<div class="c" style="left:436px;top:397px;width:65px;background:#ece4dc"><span style="letter-spacing:-0.1px">06.01.2002</span></div>
<div class="c" style="left:501px;top:397px;width:71px;background:#fff"><span style="letter-spacing:-0.6px">B-MOBIBO</span></div>
<div class="c" style="left:572px;top:397px;width:101px;background:#e84030"><span style="letter-spacing:-0.22px"><s>UKPRF/</s>486866/2021</span></div>
<div class="c" style="left:673px;top:397px;width:20px;background:#f8a858"><span style="letter-spacing:-0.2px">90</span></div>
<div class="c" style="left:693px;top:397px;width:77px;background:#e84030"><span style="letter-spacing:-0.15px">Skalická, Jana</span></div>
<div class="c" style="left:770px;top:397px;width:41px;background:#e84030"><span style="letter-spacing:-0.3px">2022</span></div>
<div class="ic" style="top:416px"></div>
<div class="c" style="left:20px;top:416px;width:35px;background:#fff"><span style="letter-spacing:-0.05px">11310</span></div>
<div class="c" style="left:55px;top:416px;width:125px;background:#fff"><span style="letter-spacing:-0.12px">bakalářské</span></div>
<div class="c" style="left:180px;top:416px;width:71px;background:#fff"><span style="letter-spacing:-0.05px">prezenční</span></div>
<div class="c j" style="left:251px;top:416px;width:185px;background:#ece4dc"><u></u><b style="width:75px;background:linear-gradient(90deg,#000 0px 37.2px,transparent 37.2px 40.9px,#000 40.9px 75px)"></b></div>
<div class="c" style="left:436px;top:416px;width:65px;background:#ece4dc"><span style="letter-spacing:-0.1px">17.05.2001</span></div>
<div class="c" style="left:501px;top:416px;width:71px;background:#fff"><span style="letter-spacing:-0.6px">B-GEOL</span></div>
<div class="c" style="left:572px;top:416px;width:101px;background:#fff"><span style="letter-spacing:-0.22px"><s>UKPRF/</s>44071/2022-</span></div>
<div class="c" style="left:673px;top:416px;width:20px;background:#fff"><span style="letter-spacing:-0.2px">10</span></div>
<div class="c" style="left:693px;top:416px;width:77px;background:#fff"><span style="letter-spacing:-0.15px">Skalická, Jana</span></div>
<div class="c" style="left:770px;top:416px;width:41px;background:#fff"><span style="letter-spacing:-0.3px">2022</span></div>
<div class="ic" style="top:435px"></div>
<div class="c" style="left:20px;top:435px;width:35px;background:#e84030"><span style="letter-spacing:-0.05px">11310</span></div>
<div class="c" style="left:55px;top:435px;width:125px;background:#e84030"><span style="letter-spacing:-0.12px">navazující magisterské</span></div>
<div class="c" style="left:180px;top:435px;width:71px;background:#e84030"><span style="letter-spacing:-0.05px">prezenční</span></div>
<div class="c j" style="left:251px;top:435px;width:185px;background:#fff"><u></u><b style="width:148px;background:linear-gradient(90deg,#000 0px 33.6px,transparent 33.6px 37.2px,#000 37.2px 94.6px,transparent 94.6px 98.2px,#000 98.2px 148.2px)"></b></div>
<div class="c" style="left:436px;top:435px;width:65px;background:#ece4dc"><span style="letter-spacing:-0.1px">27.11.1994</span></div>
<div class="c" style="left:501px;top:435px;width:71px;background:#fff"><span style="letter-spacing:-0.6px">N-GEOL</span></div>
<div class="c" style="left:572px;top:435px;width:101px;background:#e84030"><span style="letter-spacing:-0.22px"><s>UKPRF/</s>77506/2022-</span></div>
<div class="c" style="left:673px;top:435px;width:20px;background:#f8a858"><span style="letter-spacing:-0.2px">90</span></div>
<div class="c" style="left:693px;top:435px;width:77px;background:#e84030"><span style="letter-spacing:-0.15px">Řehořová, Kam</span></div>
<div class="c" style="left:770px;top:435px;width:41px;background:#e84030"><span style="letter-spacing:-0.3px">2022</span></div>
<div class="ic" style="top:454px"></div>
<div class="c" style="left:20px;top:454px;width:35px;background:#fff"><span style="letter-spacing:-0.05px">11310</span></div>
<div class="c" style="left:55px;top:454px;width:125px;background:#fff"><span style="letter-spacing:-0.12px">bakalářské</span></div>
<div class="c" style="left:180px;top:454px;width:71px;background:#fff"><span style="letter-spacing:-0.05px">prezenční</span></div>
<div class="c j" style="left:251px;top:454px;width:185px;background:#fff"><u></u><b style="width:78px;background:linear-gradient(90deg,#000 0px 49.4px,transparent 49.4px 52.6px,#000 52.6px 77.5px)"></b></div>
<div class="c" style="left:436px;top:454px;width:65px;background:#ece4dc"><span style="letter-spacing:-0.1px">02.06.2001</span></div>
<div class="c" style="left:501px;top:454px;width:71px;background:#fff"><span style="letter-spacing:-0.6px">B-DS</span></div>
<div class="c" style="left:572px;top:454px;width:101px;background:#fff"><span style="letter-spacing:-0.22px"><s>UKPRF/</s>112622/2022</span></div>
<div class="c" style="left:673px;top:454px;width:20px;background:#f8a858"><span style="letter-spacing:-0.2px">30</span></div>
<div class="c" style="left:693px;top:454px;width:77px;background:#fff"><span style="letter-spacing:-0.15px">Skalická, Jana</span></div>
<div class="c" style="left:770px;top:454px;width:41px;background:#fff"><span style="letter-spacing:-0.3px">2022</span></div>
<div class="ic" style="top:473px"></div>
<div class="c" style="left:20px;top:473px;width:35px;background:#fff"><span style="letter-spacing:-0.05px">11310</span></div>
<div class="c" style="left:55px;top:473px;width:125px;background:#fff"><span style="letter-spacing:-0.12px">navazující magisterské</span></div>
<div class="c" style="left:180px;top:473px;width:71px;background:#fff"><span style="letter-spacing:-0.05px">prezenční</span></div>
<div class="c j" style="left:251px;top:473px;width:185px;background:#fff"><u></u><b style="width:58px;background:linear-gradient(90deg,#000 0px 22.6px,transparent 22.6px 25px,#000 25px 58px)"></b></div>
<div class="c" style="left:436px;top:473px;width:65px;background:#ece4dc"><span style="letter-spacing:-0.1px">04.11.1990</span></div>
<div class="c" style="left:501px;top:473px;width:71px;background:#fff"><span style="letter-spacing:-0.6px">NA-ECO</span></div>
<div class="c" style="left:572px;top:473px;width:101px;background:#fff"><span style="letter-spacing:-0.22px"><s>UKPRF/</s>124523/2022</span></div>
<div class="c" style="left:673px;top:473px;width:20px;background:#f8a858"><span style="letter-spacing:-0.2px">91</span></div>
<div class="c" style="left:693px;top:473px;width:77px;background:#fff"><span style="letter-spacing:-0.15px">Kolínová, Klára</span></div>
<div class="c" style="left:770px;top:473px;width:41px;background:#fff"><span style="letter-spacing:-0.3px">2022</span></div>
<div class="ic" style="top:492px"></div>
<div class="c" style="left:20px;top:492px;width:35px;background:#fff"><span style="letter-spacing:-0.05px">11310</span></div>
<div class="c" style="left:55px;top:492px;width:125px;background:#fff"><span style="letter-spacing:-0.12px">bakalářské</span></div>
<div class="c" style="left:180px;top:492px;width:71px;background:#fff"><span style="letter-spacing:-0.05px">prezenční</span></div>
<div class="c j" style="left:251px;top:492px;width:185px;background:#fff"><u></u><b style="width:47px;background:linear-gradient(90deg,#000 0px 11.6px,transparent 11.6px 15.3px,#000 15.3px 47px)"></b></div>
<div class="c" style="left:436px;top:492px;width:65px;background:#ece4dc"><span style="letter-spacing:-0.1px">30.07.2001</span></div>
<div class="c" style="left:501px;top:492px;width:71px;background:#fff"><span style="letter-spacing:-0.6px">B-BI</span></div>
<div class="c" style="left:572px;top:492px;width:101px;background:#fff"><span style="letter-spacing:-0.22px"><s>UKPRF/</s>30648/2022-</span></div>
<div class="c" style="left:673px;top:492px;width:20px;background:#f8a858"><span style="letter-spacing:-0.2px">30</span></div>
<div class="c" style="left:693px;top:492px;width:77px;background:#fff"><span style="letter-spacing:-0.15px">Skalická, Jana</span></div>
<div class="c" style="left:770px;top:492px;width:41px;background:#fff"><span style="letter-spacing:-0.3px">2022</span></div>
<div class="ic" style="top:511px"></div>
<div class="c" style="left:20px;top:511px;width:35px;background:#fff"><span style="letter-spacing:-0.05px">11310</span></div>
<div class="c" style="left:55px;top:511px;width:125px;background:#fff"><span style="letter-spacing:-0.12px">doktorské</span></div>
<div class="c" style="left:180px;top:511px;width:71px;background:#fff"><span style="letter-spacing:-0.05px">prezenční</span></div>
<div class="c j" style="left:251px;top:511px;width:185px;background:#ece4dc"><u></u><b style="width:68px;background:linear-gradient(90deg,#000 0px 43.3px,transparent 43.3px 46.5px,#000 46.5px 67.7px)"></b></div>
<div class="c" style="left:436px;top:511px;width:65px;background:#ece4dc"><span style="letter-spacing:-0.1px">10.12.1995</span></div>
<div class="c" style="left:501px;top:511px;width:71px;background:#fff"><span style="letter-spacing:-0.6px">D-AORGCH</span></div>
<div class="c" style="left:572px;top:511px;width:101px;background:#fff"><span style="letter-spacing:-0.22px"><s>UKPRF/</s>207977/2022</span></div>
<div class="c" style="left:673px;top:511px;width:20px;background:#fff"><span style="letter-spacing:-0.2px">10</span></div>
<div class="c" style="left:693px;top:511px;width:77px;background:#fff"><span style="letter-spacing:-0.15px">Tymichová, Nat</span></div>
<div class="c" style="left:770px;top:511px;width:41px;background:#fff"><span style="letter-spacing:-0.3px">2022</span></div>
</div>
<!-- scrollbar -->
<div class="a" style="left:846px;top:131px;width:16px;height:412px;background:#f0f0f0"></div>
<div class="a" style="left:846px;top:158px;width:15px;height:149px;background:#cdcdcd"></div>
<svg class="a" style="left:846px;top:131px" width="16" height="412" viewBox="0 0 16 412"><path d="M4.500 11.500l3.500 -3.500l3.500 3.500" stroke="#606060" stroke-width="1.700" fill="none"/><path d="M4.500 402.300l3.500 3.500l3.500 -3.500" stroke="#606060" stroke-width="1.700" fill="none"/></svg>
<!-- legend panel -->
<div class="a" style="left:6px;top:545px;width:858px;height:27px;background:#f0f0f0;border:1px solid;border-color:#f0f0f0 #a0a0a0 #a0a0a0 #f0f0f0;box-shadow:1px 1px 0 #fff"></div>
<div class="a" style="left:11px;top:549px;width:34px;height:18px;background:#f0f0f0;border:1px solid #a0a0a0;box-shadow:1px 1px 0 #fff"></div>
<div class="sw" style="left:52px;background:#f8a858"></div>
<div class="sw" style="left:93px;background:#e0d1c2"></div>
<div class="sw" style="left:134px;background:#ece4dc"></div>
<div class="sw" style="left:175px;background:#e84030"></div>
<div class="sw" style="left:216px;background:#ff9898"></div>
<!-- sidebar buttons -->
<div class="sb" style="top:106px"><div class="ball" style="background:radial-gradient(circle at 38% 30%,#e02828 0,#b80000 35%,#680000 100%)"></div></div>
<div class="sb" style="top:134px"><div class="ball" style="background:radial-gradient(circle at 38% 30%,#e8a030 0,#b87800 40%,#704800 100%)"></div></div>
<div class="sb" style="top:162px"><div class="ball" style="background:radial-gradient(circle at 38% 30%,#7030e0 0,#4800b0 40%,#280070 100%)"></div></div>
<div class="sb" style="top:190px"><div class="ball" style="background:radial-gradient(circle at 38% 30%,#dcdc30 0,#b0b000 40%,#707000 100%)"></div></div>
<!-- tooltip -->
<div class="a" style="left:780px;top:155px;width:120px;height:17px;background:#ffffe1;border:1px solid #d4d4c8"></div>
<!-- bottom panel -->
<div class="a" style="left:3px;top:576px;width:892px;height:1px;background:#fff"></div>
<div class="a" style="left:3px;top:577px;width:892px;height:46px;background:#008080"></div>
<div class="btn" style="left:6px;top:597px;width:24px;height:25px"><svg width="22" height="23" viewBox="0 0 22 23" style="position:absolute;left:0;top:0"><g stroke="#ffff00" stroke-width="1.300"><path d="M10.500 3.500v15M3 11.200h15M5.200 5.900l10.600 10.600M15.800 5.900l-10.600 10.600"/></g><circle cx="10.500" cy="11.200" r="5.600" fill="#ffff00"/><circle cx="10.500" cy="10.800" r="3" fill="#f8f8f8" stroke="#000" stroke-width="1.100"/><path d="M10.500 9.500v4" stroke="#999" stroke-width=".8"/><path d="M9.300 13.500h2.400v4.200l-1.200 1.800l-1.200 -1.800z" fill="#000"/><path d="M10 14h1v1.500h-1z" fill="#ffff60"/><path d="M10 17h1v1h-1z" fill="#fff"/></svg></div>
<div class="btn" style="left:541px;top:594px;width:24px;height:25px"><div class="t" style="left:5px;top:0px;font-size:22px;font-weight:bold;color:#10c8d0;text-shadow:1px 1px 0 #102878">?</div></div>
<div class="btn" style="left:852px;top:578px;width:24px;height:22px"><svg width="22" height="20" style="position:absolute;left:0;top:0"><path d="M11.500 7l7.500 7.500h-15z" fill="#ff0000" stroke="#000" stroke-width=".8"/></svg></div>
<div class="btn" style="left:852px;top:601px;width:24px;height:22px"><svg width="22" height="20" style="position:absolute;left:0;top:0"><path d="M11.500 15.500l7.500 -7.500h-15z" fill="#ff0000" stroke="#000" stroke-width=".8"/></svg></div>
<div class="t" style="left:15.6px;top:83px;font-size:13px;letter-spacing:-0.027px;font-weight:bold;font-family:'Liberation Serif',serif;">Jméno Příjmení</div>
<div class="t" style="left:355.1px;top:86px;font-size:11px;letter-spacing:-0.146px;font-weight:bold;">25.12.1998</div>
<div class="t" style="left:432.9px;top:86px;font-size:11px;letter-spacing:0.179px;font-weight:bold;">PřF - doktorské prezenční, obor: D-ORGCH - Organická chemie</div>
<div class="t" style="left:293.1px;top:60px;font-size:11px;letter-spacing:-0.106px;">St. program</div>
<div class="t" style="left:355.1px;top:57px;font-size:13.5px;letter-spacing:-0.545px;font-weight:bold;">P0531D130033</div>
<div class="t" style="left:746.9px;top:55px;font-size:11px;letter-spacing:-0.086px;">29.09.2022</div>
<div class="t" style="left:747.1px;top:67px;font-size:11px;letter-spacing:-0.066px;">18:18:39</div>
<div class="t" style="left:6.2px;top:582px;font-size:11px;letter-spacing:0.024px;font-weight:bold;">Filtr</div>
<div class="t" style="left:33.1px;top:580px;font-size:12px;letter-spacing:-0.173px;">F || typ povin.:XNOSTRI</div>
<div class="t" style="left:532.9px;top:582px;font-size:11px;letter-spacing:0.347px;font-weight:bold;">Třídění</div>
<div class="t" style="left:17.6px;top:553px;font-size:11px;letter-spacing:0.509px;font-weight:bold;color:#ff0000;">text</div>
<div class="t" style="left:786.5px;top:158px;font-size:12px;letter-spacing:-0.258px;">Chybí poplatek za PŘ</div>
</body></html>
